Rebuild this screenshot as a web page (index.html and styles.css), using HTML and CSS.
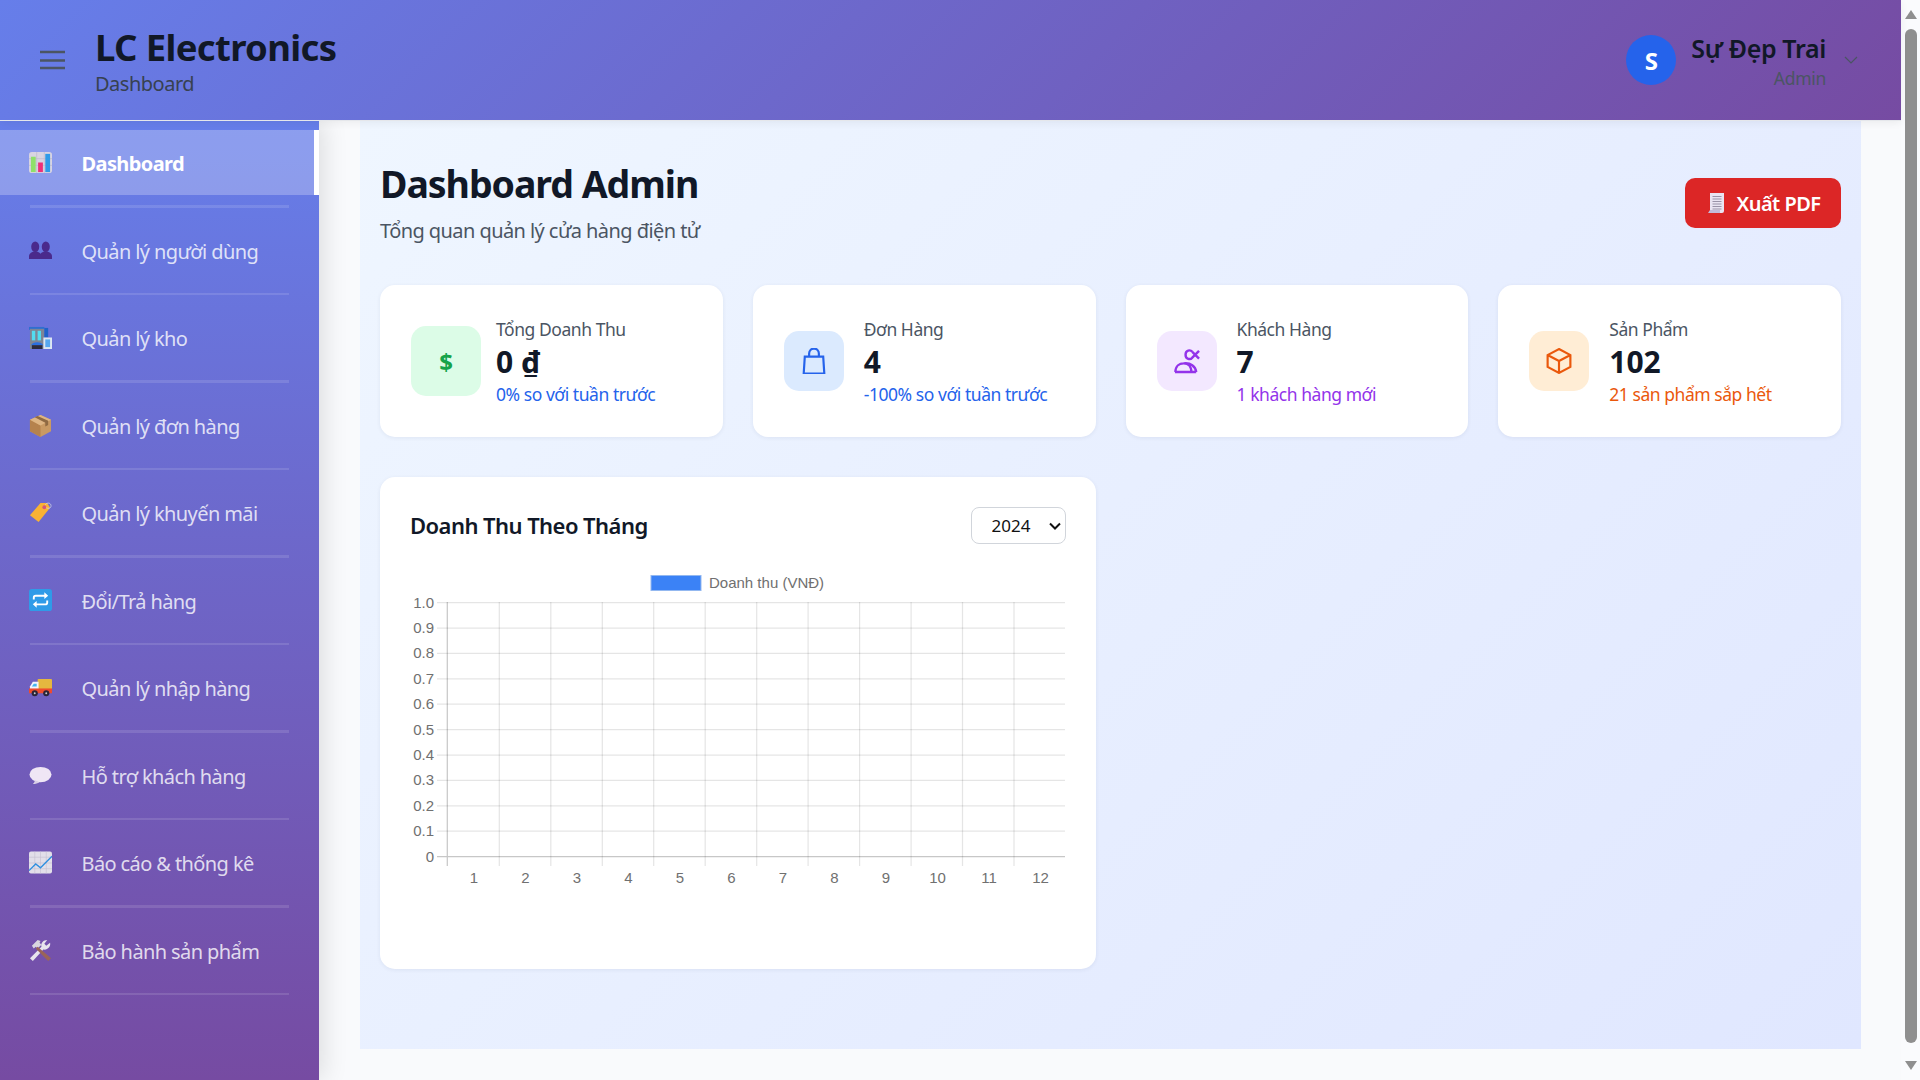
FILE: index.html
```html
<!DOCTYPE html>
<html lang="vi">
<head>
<meta charset="utf-8">
<title>LC Electronics</title>
<link rel="stylesheet" href="styles.css">
</head>
<body>
<div class="app">
  <header class="topbar">
    <div class="brand">
      <svg class="burger" viewBox="0 0 25 20"><path d="M0 2h25M0 10.500h25M0 18h25"/></svg>
      <div>
        <div class="brand-name">LC Electronics</div>
        <div class="brand-sub">Dashboard</div>
      </div>
    </div>
    <div class="user">
      <div class="avatar">S</div>
      <div class="user-text">
        <div class="user-name">Sự Đẹp Trai</div>
        <div class="user-role">Admin</div>
      </div>
      <svg class="chev" viewBox="0 0 14 9"><path d="M1 1l6 6 6-6"/></svg>
    </div>
  </header>
  <div class="body-row">
    <nav class="sidebar">
      <a class="nav-item active">
        <svg class="ni" viewBox="0 0 24 24"><rect x="0" y="1" width="24" height="22" rx="3" fill="#d8d4e2"/><path d="M8 1v22M16 1v22M0 8h24M0 15h24" stroke="#bdb8cc" stroke-width=".7"/><rect x="2" y="6" width="5" height="16" fill="#8fe06a"/><rect x="9.500" y="12" width="5" height="10" fill="#ee2f78"/><rect x="17" y="3" width="5" height="19" fill="#2e9be8"/></svg>
        <span>Dashboard</span>
      </a>
      <div class="sep"></div>
      <a class="nav-item">
        <svg class="ni" viewBox="0 0 24 20"><g fill="#4a2a8c"><ellipse cx="6.500" cy="6" rx="4.200" ry="5.500"/><path d="M0 19v-3c0-3 3-5 6.500-5s6.500 2 6.500 5v3z"/><ellipse cx="17.500" cy="6" rx="4.200" ry="5.500"/><path d="M11 19v-3c0-3 3-5 6.500-5s6.500 2 6.500 5v3z"/></g></svg>
        <span>Quản lý người dùng</span>
      </a>
      <div class="sep"></div>
      <a class="nav-item">
        <svg class="ni" viewBox="0 0 24 24"><path d="M0 1h16v3H0z" fill="#2f6fd0"/><rect x="1" y="3" width="15" height="21" fill="#7d8595"/><path d="M16 2h4v10h-4z" fill="#1f63c8"/><rect x="3" y="5" width="3.500" height="10" fill="#52dcf0"/><rect x="9" y="5" width="3.500" height="10" fill="#52dcf0"/><path d="M2 20a7 5 0 0 1 13 0z" fill="#2a6fe0"/><rect x="3" y="20" width="11" height="4" fill="#2b2a3f"/><rect x="15" y="12" width="9" height="12" fill="#dce6f2"/><rect x="17" y="14" width="5" height="8" fill="#58a8ee"/></svg>
        <span>Quản lý kho</span>
      </a>
      <div class="sep"></div>
      <a class="nav-item">
        <svg class="ni" viewBox="0 0 24 24"><path d="M12 1l11 5v12l-11 6-11-6V6z" fill="#c99a63"/><path d="M12 12v12l-11-6V6z" fill="#b5824d"/><path d="M12 1l11 5-11 6L1 6z" fill="#deb583"/><path d="M6 3.500l11 5.500v4l3-1.500V7L9 2z" fill="#8f6a42"/></svg>
        <span>Quản lý đơn hàng</span>
      </a>
      <div class="sep"></div>
      <a class="nav-item">
        <svg class="ni" viewBox="0 0 24 22"><path d="M12 1h7l3 5-12 15-9-7z" fill="#f9b233"/><circle cx="16" cy="5.500" r="2" fill="#d4547c"/><path d="M17 3c2-3 6-2 6 1s-3 3-5 2" fill="none" stroke="#cfd3e2" stroke-width=".8"/></svg>
        <span>Quản lý khuyến mãi</span>
      </a>
      <div class="sep"></div>
      <a class="nav-item">
        <svg class="ni" viewBox="0 0 24 24"><rect width="24" height="23" rx="3" fill="#2f9be8"/><path d="M5 11V9c0-1.500 1-2 2-2h11M19 12v2c0 1.500-1 2-2 2H6" fill="none" stroke="#fff" stroke-width="2"/><path d="M16 3.500l4 3.500-4 3.500zM8 12.500L4 16l4 3.500z" fill="#fff"/></svg>
        <span>Đổi/Trả hàng</span>
      </a>
      <div class="sep"></div>
      <a class="nav-item">
        <svg class="ni" viewBox="0 0 24 20"><rect x="9" y="1" width="15" height="12" rx="1" fill="#e5b73f"/><path d="M1 9l3-5h6v9H1z" fill="#f2f4fb"/><path d="M3 9l2-3h3v3z" fill="#45b4ee"/><rect x="0" y="11" width="24" height="5" fill="#ef4a2e"/><circle cx="6" cy="16" r="3.200" fill="#2a2438"/><circle cx="18" cy="16" r="3.200" fill="#2a2438"/><circle cx="6" cy="16" r="1" fill="#ccc"/><circle cx="18" cy="16" r="1" fill="#ccc"/></svg>
        <span>Quản lý nhập hàng</span>
      </a>
      <div class="sep"></div>
      <a class="nav-item">
        <svg class="ni" viewBox="0 0 24 20"><ellipse cx="12" cy="9" rx="11.500" ry="8" fill="#efe6f5"/><path d="M6 15c0 2-1 3-2 4 3 0 5-1 7-2z" fill="#d9cfe6"/></svg>
        <span>Hỗ trợ khách hàng</span>
      </a>
      <div class="sep"></div>
      <a class="nav-item">
        <svg class="ni" viewBox="0 0 24 23"><rect width="24" height="23" rx="2" fill="#e2dfe9"/><path d="M6 0v23M12 0v23M18 0v23M0 6h24M0 12h24M0 18h24" stroke="#c3bfd0" stroke-width=".6"/><path d="M0 20l7-7 5 4L24 5" fill="none" stroke="#2f8fe0" stroke-width="1.400"/></svg>
        <span>Báo cáo &amp; thống kê</span>
      </a>
      <div class="sep"></div>
      <a class="nav-item">
        <svg class="ni" viewBox="0 0 24 24"><path d="M3 7l6-6 3 1-1 2 2 2-4 4-2-2-2 2z" fill="#d9d6df"/><path d="M1 20l12-12c-1-4 2-7 6-7l-3 4 2 2 4-3c1 4-3 8-7 7L4 23z" fill="#e7e5ec"/><path d="M9 8l14 12-3 3L7 10z" fill="#9a6458"/></svg>
        <span>Bảo hành sản phẩm</span>
      </a>
      <div class="sep"></div>
    </nav>
    <main class="main">
      <div class="content">
        <div class="page-head">
          <div>
            <h1 class="page-title">Dashboard Admin</h1>
            <p class="page-sub">Tổng quan quản lý cửa hàng điện tử</p>
          </div>
          <button class="btn-pdf">
            <svg class="btn-ic" viewBox="0 0 16 20"><path d="M2 0h14v18a2 2 0 0 1-2 2H2z" fill="#e9e4f2"/><path d="M4.500 3.500h9M4.500 6h9M4.500 8.500h9M4.500 11h9M4.500 13.500h9M4.500 16h9" stroke="#9a93a8" stroke-width="1"/><path d="M0 20l2-3h10v3z" fill="#c3bada"/></svg>
            Xuất PDF
          </button>
        </div>
        <div class="grid">
          <div class="card stat">
            <div class="sicon s-green wide"><span class="dollar">$</span></div>
            <div class="stxt tight">
              <div class="st">Tổng Doanh Thu</div>
              <div class="sv">0 ₫</div>
              <div class="ss blue">0% so với tuần trước</div>
            </div>
          </div>
          <div class="card stat">
            <div class="sicon s-blue">
              <svg class="si" viewBox="0 0 24 24" stroke="#2563eb"><path d="M7.500 9V5a4.500 4.500 0 0 1 9 0v4M3.500 8h17l1 15.500h-19z"/></svg>
            </div>
            <div class="stxt">
              <div class="st">Đơn Hàng</div>
              <div class="sv">4</div>
              <div class="ss blue">-100% so với tuần trước</div>
            </div>
          </div>
          <div class="card stat">
            <div class="sicon s-purple">
              <svg class="si heavy" viewBox="0 0 27 26" stroke="#9333ea"><path d="M1 24.500H23M1.500 24.500C1.500 18 6 15.500 10 15.500s8 2.500 8 9M10 15.500c7-1 12.500 3 13 9"/><path d="M19 3.500C17 1 12 1.500 12 6.500s5 5.500 7 3l7-7M19 3.500l7 7"/></svg>
            </div>
            <div class="stxt">
              <div class="st">Khách Hàng</div>
              <div class="sv">7</div>
              <div class="ss purple">1 khách hàng mới</div>
            </div>
          </div>
          <div class="card stat">
            <div class="sicon s-orange">
              <svg class="si" viewBox="0 0 24 24" stroke="#ea580c"><path d="M12 1L22.500 6.500v11L12 23 1.500 17.500v-11zM1.500 6.500L12 12l10.500-5.500M12 12v11"/></svg>
            </div>
            <div class="stxt">
              <div class="st">Sản Phẩm</div>
              <div class="sv">102</div>
              <div class="ss orange">21 sản phẩm sắp hết</div>
            </div>
          </div>
          <section class="card chart-card">
            <div class="chart-head">
              <h2 class="chart-title">Doanh Thu Theo Tháng</h2>
              <select class="year"><option>2024</option><option>2023</option></select>
            </div>
            <svg class="chart" viewBox="411 564 655 330">
              <rect class="legend" x="652" y="576.500" width="50" height="15"/>
              <text class="ct" x="710" y="589">Doanh thu (VNĐ)</text>
              <g class="grid-l">
                <path d="M438 603.500H1066M438 629H1066M438 654.400H1066M438 679.800H1066M438 705.200H1066M438 730.500H1066M438 756H1066M438 781.400H1066M438 806.800H1066M438 832H1066"/>
                <path d="M500.300 603V867M551.800 603V867M603.300 603V867M654.700 603V867M706.200 603V867M757.700 603V867M809.100 603V867M860.600 603V867M912.100 603V867M963.500 603V867M1015 603V867"/>
              </g>
              <path class="axis" d="M438 857.500H1066M448.300 603V867"/>
              <g class="ct end">
                <text x="435" y="608.500">1.0</text><text x="435" y="634">0.9</text><text x="435" y="659.400">0.8</text><text x="435" y="684.800">0.7</text><text x="435" y="710.200">0.6</text><text x="435" y="735.500">0.5</text><text x="435" y="761">0.4</text><text x="435" y="786.400">0.3</text><text x="435" y="811.800">0.2</text><text x="435" y="837">0.1</text><text x="435" y="862.500">0</text>
              </g>
              <g class="ct mid">
                <text x="475" y="884">1</text><text x="526.500" y="884">2</text><text x="578" y="884">3</text><text x="629.500" y="884">4</text><text x="681" y="884">5</text><text x="732.500" y="884">6</text><text x="784" y="884">7</text><text x="835.500" y="884">8</text><text x="887" y="884">9</text><text x="938.500" y="884">10</text><text x="990" y="884">11</text><text x="1041.500" y="884">12</text>
              </g>
            </svg>
          </section>
        </div>
      </div>
    </main>
  </div>
</div>
<div class="scrollbar">
  <span class="arrow up"></span>
  <span class="thumb"></span>
  <span class="arrow down"></span>
</div>
</body>
</html>
```
FILE: styles.css
```css
* { box-sizing: border-box; }
html, body { margin: 0; height: 100%; overflow: hidden; }
body {
  display: flex;
  background: #f9fafc;
  font-family: "Noto Sans", "Open Sans", sans-serif;
  color: #111827;
}
.app { flex: 1; min-width: 0; display: flex; flex-direction: column; height: 1080px; }

.topbar {
  height: 121px;
  flex: none;
  border-bottom: 1px solid #e5e7eb;
  display: flex;
  align-items: center;
  justify-content: space-between;
  padding: 0 43px 0 40px;
  background: linear-gradient(135deg, #667eea, #764ba2);
  box-shadow: 0 2px 8px rgba(0,0,0,.06);
  position: relative;
  z-index: 2;
}
.brand { display: flex; align-items: center; gap: 30px; }
.burger { width: 25px; height: 20px; fill: none; stroke: #4b5563; stroke-width: 2.5; margin-top: -1px; }
.brand-name { font-size: 36.5px; line-height: 44px; font-weight: 700; letter-spacing: -.65px; color: #111827; margin-top: 2px; }
.brand-sub { font-size: 20px; line-height: 28px; color: #374151; letter-spacing: -.5px; margin-top: 1px; }
.user { display: flex; align-items: center; }
.avatar {
  width: 50px; height: 50px; border-radius: 50%;
  background: #2563eb; color: #fff;
  font-size: 24px; font-weight: 700;
  display: flex; align-items: center; justify-content: center;
}
.user-text { text-align: right; margin-left: 15px; }
.user-name { font-size: 25px; line-height: 32px; font-weight: 600; letter-spacing: -.35px; color: #111827; }
.user-role { font-size: 17.5px; line-height: 24px; color: #4b5563; letter-spacing: -.3px; margin-top: 2px; margin-bottom: -2px; }
.chev { width: 14px; height: 9px; fill: none; stroke: #4b5563; stroke-width: 1.2; margin-left: 18px; }

.body-row { flex: 1; min-height: 0; display: flex; }

.sidebar {
  width: 319px; flex: none;
  padding-top: 9px;
  background: linear-gradient(180deg, #667eea, #764ba2);
  box-shadow: 4px 0 24px rgba(0,0,0,.12);
  position: relative;
  z-index: 1;
}
.nav-item {
  height: 65px;
  display: flex;
  align-items: center;
  padding-left: 29px;
  color: rgba(255,255,255,.8);
  font-size: 20px;
  letter-spacing: -.6px;
}
.nav-item span { margin-left: 29.500px; margin-top: 2px; }
.ni { width: 23px; height: 23px; flex: none; }
.nav-item.active {
  background: rgba(255,255,255,.25);
  border-right: 5px solid #fff;
  color: #fff;
  font-weight: 700;
}
.sep { height: 2.5px; margin: 10px 30px; background: rgba(255,255,255,.12); }

.main { flex: 1; min-width: 0; padding: 0 40px 31px 41px; }
.content {
  height: 100%;
  padding: 40px 20px 0;
  background: linear-gradient(135deg, #eff6ff, #e0e7ff);
}
.page-head { display: flex; align-items: center; justify-content: space-between; height: 84px; margin-bottom: 40px; }
.page-title { margin: -1px 0 0; font-size: 37.5px; line-height: 48px; font-weight: 700; letter-spacing: -1.05px; color: #111827; }
.page-sub { margin: 9px 0 0; font-size: 20px; line-height: 28px; color: #4b5563; letter-spacing: -.57px; }
.btn-pdf {
  width: 156px; height: 50px;
  border: 0; border-radius: 10px;
  padding: 0 0 0 3px;
  background: #dc2626; color: #fff;
  font: 600 20px "Noto Sans", sans-serif;
  letter-spacing: -.5px;
  display: flex; align-items: center; justify-content: center; gap: 12px;
}
.btn-ic { width: 16px; height: 20px; }

.grid { display: grid; grid-template-columns: repeat(4, 1fr); gap: 40px 30px; }
.card { background: #fff; border-radius: 15px; box-shadow: 0 1px 4px rgba(30,40,90,.07); }
.stat { height: 152px; padding: 0 20px 0 31px; display: flex; align-items: center; }
.sicon { width: 60px; height: 60px; flex: none; border-radius: 15px; display: flex; align-items: center; justify-content: center; }
.sicon.wide { width: 70px; height: 70px; }
.s-green { background: #dcfce7; }
.s-blue { background: #dbeafe; }
.s-purple { background: #f3e8ff; }
.s-orange { background: #ffedd5; }
.dollar { font: 700 24px "Noto Sans", sans-serif; color: #16a34a; }
.si { width: 26px; height: 26px; fill: none; stroke-width: 2; }
.si.heavy { stroke-width: 2.5; }
.stxt { margin-left: 20px; min-width: 0; }
.stxt.tight { margin-left: 15px; }
.st { font-size: 17.5px; line-height: 28px; color: #4b5563; letter-spacing: -.45px; }
.sv { font-size: 30px; line-height: 38px; font-weight: 700; color: #111827; }
.ss { font-size: 17.5px; line-height: 27px; letter-spacing: -.45px; white-space: nowrap; }
.blue { color: #2563eb; }
.purple { color: #9333ea; }
.orange { color: #ea580c; }

.chart-card { grid-column: span 2; height: 492px; padding: 30px; display: flex; flex-direction: column; }
.chart-head { display: flex; align-items: center; justify-content: space-between; height: 37px; }
.chart-title { margin: -1px 0 0; font-size: 22px; font-weight: 600; letter-spacing: -.55px; color: #111827; }
.year {
  appearance: none;
  width: 95px; height: 37px;
  border: 1px solid #d1d5db; border-radius: 8px;
  background: #fff url("data:image/svg+xml,%3Csvg xmlns='http://www.w3.org/2000/svg' width='12' height='8'%3E%3Cpath d='M1 1.500l5 5 5-5' fill='none' stroke='%23111' stroke-width='2'/%3E%3C/svg%3E") no-repeat right 4px center;
  color: #111;
  font: 17px "Noto Sans", sans-serif;
  padding: 0 8px 0 20px;
}
.chart { width: 655px; height: 330px; margin-top: 19px; display: block; }
.legend { fill: #3b82f6; stroke: #93b8f0; stroke-width: 1; }
.ct { font: 15px "Liberation Sans", Arial, sans-serif; fill: #707070; }
.end { text-anchor: end; }
.mid { text-anchor: middle; }
.grid-l path { stroke: rgba(0,0,0,.1); stroke-width: 1.25; fill: none; }
.axis { stroke: rgba(0,0,0,.22); stroke-width: 1.25; fill: none; }

.scrollbar { width: 19px; flex: none; height: 1080px; background: #fafbfd; display: flex; flex-direction: column; align-items: center; padding: 10px 0; }
.thumb { width: 12px; height: 1014px; margin: 10px 0 18px; border-radius: 6px; background: #8f8f8f; }
.arrow { width: 0; height: 0; border-left: 6.5px solid transparent; border-right: 6.5px solid transparent; }
.arrow.up { border-bottom: 9px solid #8f8f8f; }
.arrow.down { border-top: 9px solid #8f8f8f; }
```
